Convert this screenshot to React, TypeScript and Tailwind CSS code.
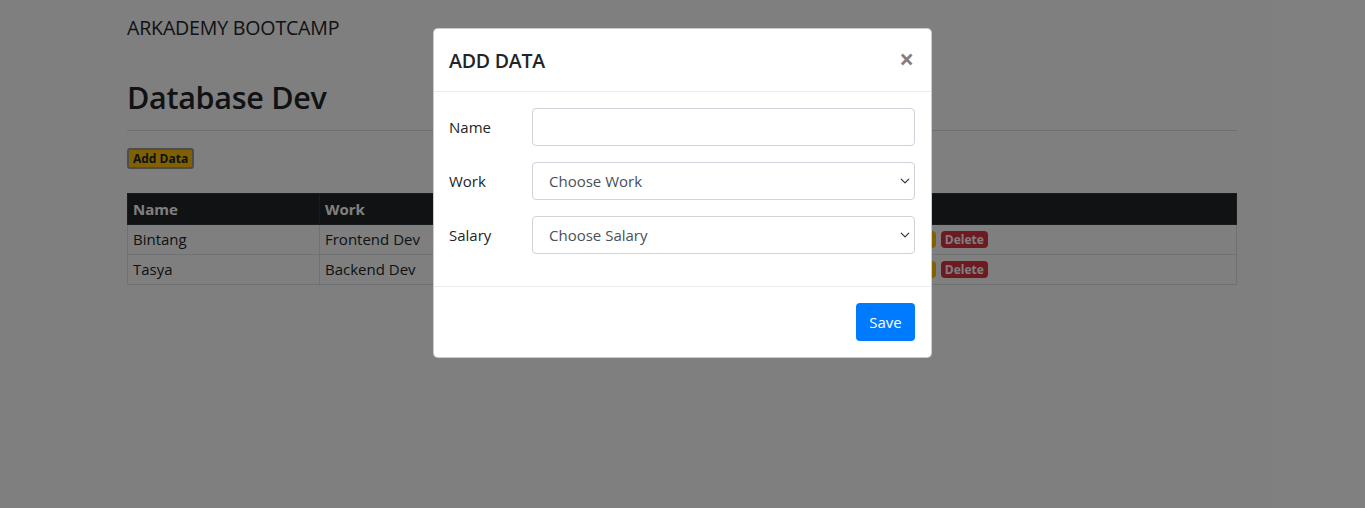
import React from "react";

const font = { fontFamily: '"Open Sans", "Noto Sans", "Liberation Sans", sans-serif' };

function Chevron() {
  return (
    <svg width="12" height="10" viewBox="0 0 16 16" className="shrink-0">
      <path d="m2 5 6 6 6-6" fill="none" stroke="#343a40" strokeWidth="2" strokeLinecap="round" strokeLinejoin="round" />
    </svg>
  );
}

export default function App() {
  const rows = [
    { name: "Bintang", work: "Frontend Dev" },
    { name: "Tasya", work: "Backend Dev" },
  ];
  return (
    <div className="relative w-[1365px] h-[508px] overflow-hidden bg-white text-[#212529]" style={font}>
      <div className="ml-[127px] w-[1110px]">
        <div className="pt-[14px] h-[44px] text-[19.6px] leading-[28px] tracking-[-0.2px]">ARKADEMY BOOTCAMP</div>
        <h2 className="mt-[33px] text-[30.5px] leading-[40px] font-semibold tracking-[-0.3px]">Database Dev</h2>
        <hr className="mt-[13px] border-t border-[#dcdcdc]" />
        <button className="mt-[17px] h-[21px] px-[4px] bg-[#ffc107] border-2 border-[#9a9a9a] rounded-[3px] text-[12px] leading-[15px] font-bold text-[#212529]">
          Add Data
        </button>
        <table className="mt-[24px] w-full table-fixed border-collapse text-[15px]">
          <colgroup>
            <col className="w-[192px]" />
            <col className="w-[192px]" />
            <col className="w-[367px]" />
            <col />
          </colgroup>
          <thead>
            <tr className="bg-[#212529] text-white h-[31px]">
              <th className="text-left font-bold px-[5px] border border-[#32383e]">Name</th>
              <th className="text-left font-bold px-[5px] border border-[#32383e]">Work</th>
              <th className="text-left font-bold px-[5px] border border-[#32383e]"></th>
              <th className="text-left font-bold px-[5px] border border-[#32383e]"></th>
            </tr>
          </thead>
          <tbody>
            {rows.map((r) => (
              <tr key={r.name} className="h-[30px]">
                <td className="px-[5px] border border-[#dee2e6]">{r.name}</td>
                <td className="px-[5px] border border-[#dee2e6]">{r.work}</td>
                <td className="px-[5px] border border-[#dee2e6]"></td>
                <td className="px-[5px] border border-[#dee2e6]">
                  <div className="flex items-center gap-[5px]">
                    <span className="h-[17px] px-[4px] rounded-[4px] bg-[#ffc107] text-[#212529] text-[12px] font-bold leading-[17px]">Update</span>
                    <span className="h-[17px] px-[4px] rounded-[4px] bg-[#dc3545] text-white text-[12px] font-bold leading-[17px]">Delete</span>
                  </div>
                </td>
              </tr>
            ))}
          </tbody>
        </table>
      </div>

      <div className="absolute inset-0 bg-black/50">
        <div className="ml-[433px] mt-[28px] w-[499px] bg-white border border-black/20 rounded-[5px]">
          <div className="flex items-center justify-between h-[63px] pl-[15px] pr-[16px] pt-[2px] border-b border-[#e9ecef]">
            <div className="text-[19.5px] font-semibold text-[#212529] tracking-[-0.2px]">ADD DATA</div>
            <span className="text-[26px] leading-none font-bold text-black/50 mr-[1px] -mt-[4px]">×</span>
          </div>
          <div className="p-[16px] pl-[15px] flex flex-col gap-[16px] pb-[32px] border-b border-[#e9ecef]">
            <div className="flex items-center">
              <div className="w-[83px] text-[15px]">Name</div>
              <div className="flex-1 h-[38px] border border-[#ced4da] rounded-[4px]" />
            </div>
            <div className="flex items-center">
              <div className="w-[83px] text-[15px]">Work</div>
              <div className="flex-1 h-[38px] border border-[#ced4da] rounded-[4px] flex items-center justify-between pl-[16px] pr-[3px] text-[15px] text-[#495057]">
                <span>Choose Work</span>
                <Chevron />
              </div>
            </div>
            <div className="flex items-center">
              <div className="w-[83px] text-[15px]">Salary</div>
              <div className="flex-1 h-[38px] border border-[#ced4da] rounded-[4px] flex items-center justify-between pl-[16px] pr-[3px] text-[15px] text-[#495057]">
                <span>Choose Salary</span>
                <Chevron />
              </div>
            </div>
          </div>
          <div className="flex justify-end p-[16px]">
            <button className="h-[38px] w-[59px] bg-[#007bff] text-white rounded-[4px] text-[15px]">Save</button>
          </div>
        </div>
      </div>
    </div>
  );
}
